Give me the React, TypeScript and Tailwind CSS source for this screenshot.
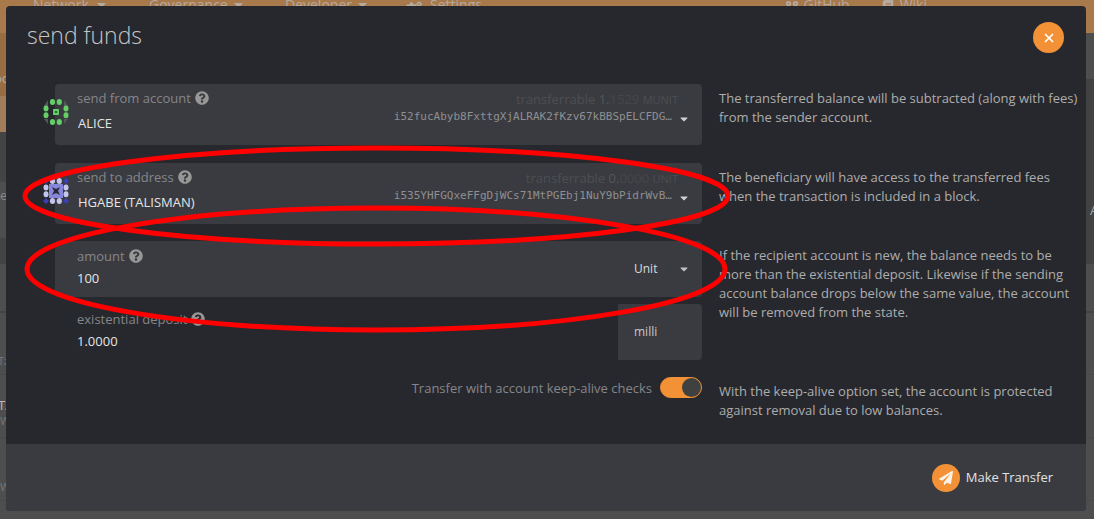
import { useState, type ReactNode } from 'react';
import { FaCaretDown, FaCogs, FaBook, FaPaperPlane, FaQuestionCircle } from 'react-icons/fa';
import { GitFork, X } from 'lucide-react';

function AliceIcon() {
  return (
    <svg viewBox="0 0 26 28" className="h-7 w-[26px]" aria-hidden="true">
      <path d="M5 2L1 8h4zM21 2l4 6h-4zM5 26l-4-5h4zM21 26l4-5h-4z" fill="#55575a" />
      <g fill="#65cf67">
        <ellipse cx="9.5" cy="4" rx="2.6" ry="3" />
        <ellipse cx="16.3" cy="4" rx="2.6" ry="3" />
        <ellipse cx="9.5" cy="24" rx="2.6" ry="3" />
        <ellipse cx="16.3" cy="24" rx="2.6" ry="3" />
        <ellipse cx="3" cy="10.6" rx="2.5" ry="3" />
        <ellipse cx="3" cy="17.3" rx="2.5" ry="3" />
        <ellipse cx="23" cy="10.6" rx="2.5" ry="3" />
        <ellipse cx="23" cy="17.3" rx="2.5" ry="3" />
      </g>
      <path d="M11 12h4v4h-4z" fill="#35623a" stroke="#65cf67" strokeWidth="1.8" />
    </svg>
  );
}

function TalismanIcon() {
  return (
    <svg viewBox="0 0 26 28" className="h-7 w-[26px]" aria-hidden="true">
      <path d="M3 1l3 3-3 3-3-3zM23 1l3 3-3 3-3-3zM3 21l3 3-3 3-3-3zM23 21l3 3-3 3-3-3z" fill="#3d3eb5" />
      <g fill="#c4c5ee">
        <ellipse cx="9.5" cy="4" rx="2.6" ry="3" />
        <ellipse cx="16.3" cy="4" rx="2.6" ry="3" />
        <ellipse cx="9.5" cy="24" rx="2.6" ry="3" />
        <ellipse cx="16.3" cy="24" rx="2.6" ry="3" />
        <ellipse cx="3" cy="10.6" rx="2.5" ry="3" />
        <ellipse cx="3" cy="17.3" rx="2.5" ry="3" />
        <ellipse cx="23" cy="10.6" rx="2.5" ry="3" />
        <ellipse cx="23" cy="17.3" rx="2.5" ry="3" />
      </g>
      <path d="M6 7h14v14H6z" fill="#8687dc" />
      <path d="M9 10l4 2 4-2-2 4 2 4-4-2-4 2 2-4z" fill="#292a31" />
    </svg>
  );
}

function FieldLabel({ htmlFor, children }: { htmlFor: string; children: ReactNode }) {
  return (
    <label htmlFor={htmlFor} className="flex items-center gap-1 text-[13px] leading-5 text-[#85868a]">
      {children}
      <FaQuestionCircle className="size-3.5 text-[#979797]" />
    </label>
  );
}

interface AccountProps {
  id: string;
  label: string;
  name: string;
  address: string;
  whole: string;
  decimals: string;
  unit: string;
  icon: ReactNode;
}

function AccountField({ id, label, name, address, whole, decimals, unit, icon }: AccountProps) {
  return (
    <div className="relative flex h-[61px] rounded bg-[#3a3b40] pl-[22px] pr-3">
      <div className="absolute -left-3 top-3.5">{icon}</div>
      <div className="flex flex-1 flex-col pt-1">
        <FieldLabel htmlFor={id}>{label}</FieldLabel>
        <input id={id} defaultValue={name} className="mt-[3px] w-full bg-transparent pl-px text-[13px] leading-6 text-[#e4e4e4] outline-none" />
      </div>
      <div className="flex flex-col items-end pt-[5px]">
        <div className="pr-3 text-[13px] leading-5 text-[#4d4e52]">
          transferrable <span className="text-[#55565a]">{whole}</span>
          <span className="text-[#46474b]">{decimals}</span> <span className="text-[11px]">{unit}</span>
        </div>
        <div className="flex items-start gap-1.5 text-[#8f8f92]">
          <span className="font-['DejaVu_Sans_Mono',monospace] text-[11px] leading-[14px]">{address}</span>
          <button type="button" aria-label={`Choose ${label}`} className="pt-[3px]">
            <FaCaretDown className="size-3 text-[#d0d0d0]" />
          </button>
        </div>
      </div>
    </div>
  );
}

function Row({ children, help, className }: { children: ReactNode; help: string; className: string }) {
  return (
    <div className={`grid grid-cols-[647fr_361fr] gap-x-[17px] ${className}`}>
      <div>{children}</div>
      <p className="pt-[5px] text-[13px] leading-[19px] text-[#adadae]">{help}</p>
    </div>
  );
}

function MenuCaret() {
  return (
    <svg viewBox="0 0 9 5" className="mt-[3px] h-[5px] w-[9px] fill-current">
      <path d="M0 0h9L4.5 5z" />
    </svg>
  );
}

function Backdrop() {
  return (
    <div className="absolute inset-0 overflow-hidden bg-[#4e4e4e]" aria-hidden="true">
      <div className="flex h-[33px] bg-[#a8794a] pl-[33px] text-[14px] leading-[10px] text-[#b5aaa0]">
        <span className="flex w-[116px] gap-2">Network <MenuCaret /></span>
        <span className="flex w-[136px] gap-1.5">Governance <MenuCaret /></span>
        <span className="flex w-[121px] gap-1.5">Developer <MenuCaret /></span>
        <span className="flex gap-2"><FaCogs className="size-4" />Settings</span>
        <span className="ml-auto flex gap-1"><GitFork className="size-3.5" strokeWidth={3} />GitHub</span>
        <span className="ml-8 mr-[167px] flex gap-1.5"><FaBook className="size-3" />Wiki</span>
      </div>
      <div className="flex justify-between text-[13px]">
        <div className="w-1.5">
          <div className="h-[63px] bg-[#996d42] pt-9 text-[#b5aaa0]"><span className="-ml-1.5">oo</span></div>
          <div className="h-9 bg-[#a17d5b]" />
          <div className="h-[50px] bg-[#444]" />
          <div className="h-14 bg-[#4e4e4e] pt-1 text-[#888]">e</div>
          <div className="h-[26px] bg-[#444]" />
          <div className="h-[49px] border-b-2 border-[#444]" />
          <div className="h-[62px] border-b border-[#484848] pt-10 text-[11px] text-[#777]"><span className="-ml-0.5">Tz</span></div>
          <div className="h-[63px] border-b border-[#484848] pt-5 leading-5 text-[#bbb]">
            <div className="-ml-0.5">TA</div>
            <div className="text-[11px] leading-3 text-[#777]">W</div>
          </div>
          <div className="h-[63px] border-b border-[#484848] pt-[41px] text-[11px] text-[#777]">W</div>
        </div>
        <div className="w-2">
          <div className="h-[46px] bg-[#4e4e4e]" />
          <div className="h-[185px] bg-[#424242] pl-1 pt-[122px] text-[#aaa]">A</div>
          <div className="h-[49px] border-b-2 border-[#444]" />
          <div className="h-[62px] border-b border-[#484848]" />
          <div className="h-[63px] border-b border-[#484848]" />
          <div className="h-[63px] border-b border-[#484848]" />
        </div>
      </div>
    </div>
  );
}

export default function App() {
  const [alive, setAlive] = useState(true);
  return (
    <div className="relative min-h-screen py-1.5 pl-1.5 pr-2 font-['Open_Sans','Noto_Sans',sans-serif]">
      <Backdrop />
      <main role="dialog" aria-labelledby="title" className="relative overflow-hidden rounded bg-[#27282d]">
        <header className="flex h-[78px] items-start justify-between pl-[21px] pr-[22px] pt-4">
          <h1 id="title" className="text-[23px] font-light leading-[26px] text-[#c5c5c5]">send funds</h1>
          <button type="button" aria-label="Close" className="flex size-[31px] items-center justify-center rounded-full bg-[#f29135] text-white">
            <X className="size-3.5" strokeWidth={3} />
          </button>
        </header>

        <div className="h-[360px] pl-[49px] pr-1.5">
          <Row className="h-[79px]" help="The transferred balance will be subtracted (along with fees) from the sender account.">
            <AccountField id="from" label="send from account" name="ALICE" address="i52fucAbyb8FxttgXjALRAK2fKzv67kBBSpELCFDG…" whole="1." decimals="1529" unit="MUNIT" icon={<AliceIcon />} />
          </Row>
          <Row className="h-[78px]" help="The beneficiary will have access to the transferred fees when the transaction is included in a block.">
            <AccountField id="to" label="send to address" name="HGABE (TALISMAN)" address="i535YHFGQxeFFgDjWCs71MtPGEbj1NuY9bPidrWvB…" whole="0." decimals="0000" unit="UNIT" icon={<TalismanIcon />} />
          </Row>
          <Row className="h-[136px]" help="If the recipient account is new, the balance needs to be more than the existential deposit. Likewise if the sending account balance drops below the same value, the account will be removed from the state.">
            <div className="flex h-14 rounded bg-[#3a3b40] pl-[22px] pr-3">
              <div className="flex-1 pt-[5px]">
                <FieldLabel htmlFor="amount">amount</FieldLabel>
                <input id="amount" defaultValue="100" className="block w-full bg-transparent text-[13px] leading-6 text-[#e4e4e4] outline-none" />
              </div>
              <div className="relative flex items-center">
                <select aria-label="Unit" defaultValue="Unit" className="w-14 appearance-none bg-transparent text-[12px] leading-5 text-[#dcdcdc] outline-none">
                  <option>Unit</option>
                  <option>milli</option>
                </select>
                <FaCaretDown className="pointer-events-none absolute right-0 size-3 text-[#c0c0c0]" />
              </div>
            </div>
            <div className="mt-[7px] flex h-14 pl-[22px]">
              <div className="flex-1 pt-[5px]">
                <FieldLabel htmlFor="deposit">existential deposit</FieldLabel>
                <input id="deposit" readOnly value="1.0000" className="block w-full bg-transparent text-[13px] leading-6 text-[#e4e4e4] outline-none" />
              </div>
              <div className="flex h-14 w-[84px] items-center rounded-r bg-[#3a3b40] pl-4 text-[12px] text-[#c8c8c8]">milli</div>
            </div>
          </Row>
          <Row className="h-[67px]" help="With the keep-alive option set, the account is protected against removal due to low balances.">
            <label className="flex items-center justify-end gap-2 text-[13px] leading-5 text-[#85868a]">
              Transfer with account keep-alive checks
              <input type="checkbox" checked={alive} onChange={() => setAlive(!alive)} className="peer sr-only" />
              <span className="flex h-[21px] w-[42px] rounded-full border border-[#f29135] bg-[#3f4140] peer-checked:justify-end peer-checked:bg-[#f29135]">
                <span className="size-[19px] rounded-full bg-[#3f4140]" />
              </span>
            </label>
          </Row>
        </div>

        <footer className="flex h-[67px] items-center justify-end bg-[#3a3b40] pr-[33px]">
          <button type="button" className="flex items-center gap-1.5 text-[13px] text-[#e2e2e2]">
            <span className="flex size-7 items-center justify-center rounded-full bg-[#f29135] text-[#fdf1e5]">
              <FaPaperPlane className="size-3.5" />
            </span>
            Make Transfer
          </button>
        </footer>
      </main>
      <svg viewBox="0 0 1094 519" preserveAspectRatio="none" className="pointer-events-none absolute inset-0 size-full" aria-hidden="true">
        <g fill="none" stroke="#ff0000" strokeWidth="5">
          <ellipse cx="376.5" cy="196" rx="351.5" ry="48" />
          <ellipse cx="376" cy="269" rx="349" ry="61" />
        </g>
      </svg>
    </div>
  );
}
